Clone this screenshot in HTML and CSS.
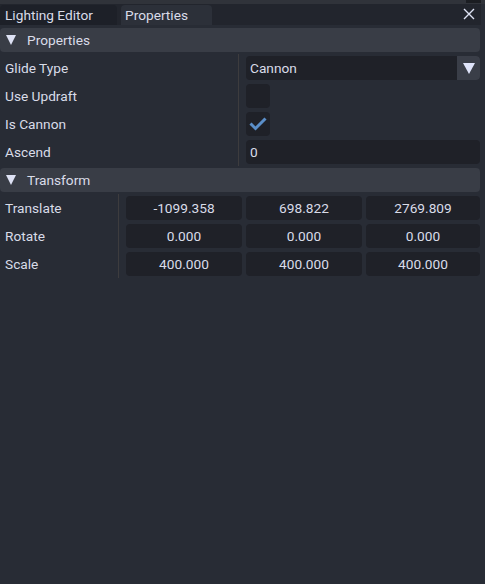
FILE: index.html
```html
<!DOCTYPE html>
<html>
<head>
<meta charset="utf-8">
<link rel="stylesheet" href="styles.css">
</head>
<body>
<div class="topstrip"><span class="topstrip-dark"></span></div>
<div class="tabbar">
  <div class="tab tab-inactive">Lighting Editor</div>
  <div class="tab tab-active">Properties</div>
  <div class="tab-fill"></div>
  <svg class="close" width="12" height="12" viewBox="0 0 12 12"><path d="M1 1 L11 11 M11 1 L1 11" stroke="#dfe3f5" stroke-width="1.4" fill="none"/></svg>
</div>
<div class="panel">
  <div class="header"><span class="tri"></span><span>Properties</span></div>
  <div class="section props">
    <div class="label">Glide Type</div>
    <div class="cell"><div class="combo"><span class="combo-text">Cannon</span><span class="combo-btn"><span class="tri tri-btn"></span></span></div></div>
    <div class="label">Use Updraft</div>
    <div class="cell"><div class="check"></div></div>
    <div class="label">Is Cannon</div>
    <div class="cell"><div class="check"><svg width="24" height="24" viewBox="0 0 24 24"><path d="M4.5 11.5 L9.5 16.5 L19.5 6.5" stroke="#5b8fc9" stroke-width="3" fill="none"/></svg></div></div>
    <div class="label">Ascend</div>
    <div class="cell"><div class="input">0</div></div>
  </div>
  <div class="header"><span class="tri"></span><span>Transform</span></div>
  <div class="section xform">
    <div class="label">Translate</div>
    <div class="cell triple"><div class="num">-1099.358</div><div class="num">698.822</div><div class="num">2769.809</div></div>
    <div class="label">Rotate</div>
    <div class="cell triple"><div class="num">0.000</div><div class="num">0.000</div><div class="num">0.000</div></div>
    <div class="label">Scale</div>
    <div class="cell triple"><div class="num">400.000</div><div class="num">400.000</div><div class="num">400.000</div></div>
  </div>
</div>
</body>
</html>
```
FILE: styles.css
```css
html, body {
  margin: 0;
  padding: 0;
  background: #282c35;
  width: 485px;
  height: 584px;
  overflow: hidden;
  font-family: Roboto, "Liberation Sans", sans-serif;
  font-size: 13.7px;
  color: #d9dce8;
}
.topstrip {
  height: 4px;
  background: #30333a;
  display: flex;
  justify-content: flex-end;
  padding-right: 4px;
}
.topstrip-dark {
  width: 15px;
  height: 3px;
  background: #1b1d22;
}
.tabbar {
  height: 21px;
  width: 481px;
  background: #22252d;
  display: flex;
  align-items: flex-end;
}
.tab {
  height: 20px;
  line-height: 20px;
  padding: 0 5px;
  box-sizing: border-box;
  border-radius: 4px 4px 0 0;
}
.tab-inactive {
  width: 117px;
  background: #1d2028;
}
.tab-active {
  width: 91px;
  margin-left: 4px;
  background: #2c3039;
  padding-left: 4px;
}
.tab-fill { flex: 1; }
.close {
  align-self: center;
  margin-right: 6px;
  margin-top: -1px;
}
.panel {
  padding-top: 3px;
  width: 480px;
}
.header {
  height: 24px;
  background: #393d46;
  border-radius: 4px;
  display: flex;
  align-items: center;
  gap: 11px;
  padding-left: 6px;
}
.tri {
  width: 0;
  height: 0;
  border-left: 5.5px solid transparent;
  border-right: 5.5px solid transparent;
  border-top: 10px solid #dde1f4;
}
.section {
  display: grid;
  padding: 2px 0;
}
.props { grid-template-columns: 238px 1fr; }
.xform { grid-template-columns: 118px 1fr; }
.label {
  height: 28px;
  line-height: 28px;
  padding-left: 5px;
}
.cell {
  height: 28px;
  border-left: 1px solid #3d3c3e;
  padding: 2px 0 2px 7px;
  box-sizing: border-box;
}
.combo {
  height: 24px;
  display: flex;
  background: #1f2128;
  border-radius: 4px;
  overflow: hidden;
}
.combo-text {
  flex: 1;
  line-height: 24px;
  padding-left: 4px;
}
.combo-btn {
  width: 23px;
  background: #3a3e48;
  display: flex;
  align-items: center;
  justify-content: center;
}
.tri-btn {
  border-left-width: 6px;
  border-right-width: 6px;
  border-top-width: 11px;
  border-top-color: #dfe4fa;
}
.check {
  width: 24px;
  height: 24px;
  background: #1f2128;
  border-radius: 4px;
}
.check svg { display: block; }
.input {
  height: 24px;
  line-height: 24px;
  background: #1f2128;
  border-radius: 4px;
  padding-left: 4px;
}
.triple {
  display: grid;
  grid-template-columns: 116px 116px 114px;
  gap: 4px;
}
.num {
  height: 24px;
  line-height: 24px;
  background: #1f2128;
  border-radius: 4px;
  text-align: center;
}
```
